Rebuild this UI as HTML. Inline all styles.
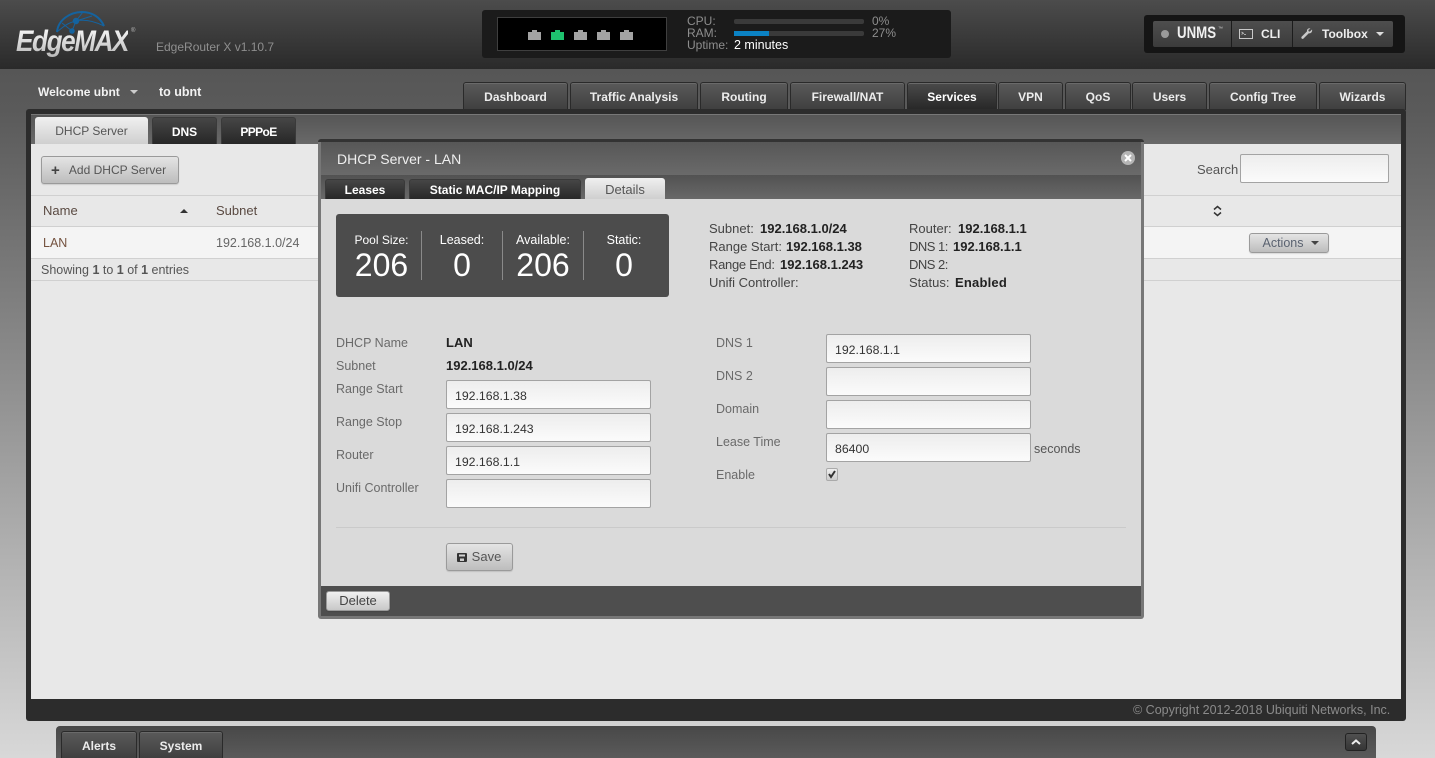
<!DOCTYPE html>
<html style="overflow:hidden;width:1435px;height:758px"><head><meta charset="utf-8"><title>EdgeMAX</title>
<style>
html,body{margin:0;padding:0}
body{width:1435px;height:758px;overflow:hidden;position:relative;font-family:"Liberation Sans",sans-serif;font-size:13px;background:#565656}
div,svg{position:absolute;box-sizing:border-box}
.t{position:absolute;white-space:nowrap;line-height:16px}
#root{left:0;top:0;width:1435px;height:758px;overflow:hidden;background:linear-gradient(#565656 69px,#5a5a5a 110px,#d8d8d8 758px)}
.tab{border:1px solid #2a2a2a;border-bottom:0;border-radius:3px 3px 0 0;background:linear-gradient(#5a5a5a,#3f3f3f);color:#ececec;font-weight:bold;text-align:center;font-size:12px;white-space:nowrap;box-shadow:inset 0 1px 0 #6a6a6a}
.dark{background:linear-gradient(#464646,#272727);border:1px solid #3a3a3a;border-bottom:0;color:#fff;border-radius:3px 3px 0 0;font-weight:bold;font-size:12px;text-align:center;white-space:nowrap;position:absolute}
.light{background:linear-gradient(#f0f0f0,#cfcfcf);color:#555;text-align:center;border-radius:3px 3px 0 0;position:absolute;white-space:nowrap}
.inp{background:linear-gradient(#ededed,#fbfbfb);border:1px solid #a3a3a3;border-radius:2px;height:29px;width:205px;color:#333;font-size:12.3px;line-height:29px;padding-left:8px;white-space:nowrap}
.btn{background:linear-gradient(#e4e4e4,#bdbdbd);border:1px solid #9a9a9a;border-radius:3px;color:#555;text-align:center;white-space:nowrap;box-shadow:0 1px 1px rgba(0,0,0,.12)}
.lb{color:#6a6a6a;font-size:12.5px}
.d{color:#444}
.b{color:#222;font-weight:bold;font-size:13px}
.w{color:#fff}
.hline{height:1px;background:#d0d0d0}
</style></head><body>
<div id="root">

<!-- header -->
<div style="left:0;top:0;width:1435px;height:69px;background:linear-gradient(#4c4c4c,#2a2a2a)"></div>
<span class="t" style="left:16px;top:25px;font-size:30px;line-height:34px;font-weight:bold;font-style:italic;letter-spacing:-1.6px;color:#dcdcdc;background:linear-gradient(#fff,#b4b4b4);-webkit-background-clip:text;background-clip:text;-webkit-text-fill-color:transparent;transform:scaleX(.87);transform-origin:0 0">EdgeMAX</span>
<svg style="left:50px;top:8px" width="66" height="36" viewBox="0 0 66 36" fill="none" stroke="#14639f" stroke-width="1.5">
<path d="M7 24C8 12 20 4 32 4C42 4 50 9 54 18" stroke-width="2"/>
<path d="M7 24C13 19 17 15 26 13C35 11 44 13 54 18" stroke-width="1"/>
<path d="M12 15L22 23L26 13L33 4M26 13L42 8" stroke-width="1"/>
<circle cx="26" cy="13" r="2.5" fill="#14639f"/><circle cx="22" cy="23" r="2" fill="#14639f"/>
</svg>
<span class="t" style="left:131px;top:27px;font-size:6px;line-height:8px;color:#bbb">®</span>
<span class="t" style="left:156px;top:39px;font-size:12px;color:#8f8f8f">EdgeRouter X v1.10.7</span>

<!-- status box -->
<div style="left:482px;top:10px;width:469px;height:48px;background:#1b1b1b;border-radius:3px"></div>
<div style="left:497px;top:17px;width:170px;height:34px;background:#000;border:1px solid #3f3f3f"></div>
<svg style="left:528px;top:29px" width="106" height="12" viewBox="0 0 106 12">
<path fill="#a3a3a3" d="M0 3H4V1H9V3H13V11H0Z"/>
<path fill="#1ec26e" d="M23 3H27V1H32V3H36V11H23Z"/>
<path fill="#a3a3a3" d="M46 3H50V1H55V3H59V11H46Z"/>
<path fill="#a3a3a3" d="M69 3H73V1H78V3H82V11H69Z"/>
<path fill="#a3a3a3" d="M92 3H96V1H101V3H105V11H92Z"/>
</svg>
<span class="t" style="left:687px;top:13px;font-size:12px;color:#8e8e8e">CPU:</span>
<span class="t" style="left:687px;top:25px;font-size:12px;color:#8e8e8e">RAM:</span>
<span class="t" style="left:687px;top:37px;font-size:12px;color:#8e8e8e">Uptime:</span>
<span class="t" style="left:734px;top:37px;font-size:12.5px;color:#fff">2 minutes</span>
<div style="left:734px;top:19px;width:130px;height:5px;background:#3a3a3a;border-radius:2px"></div>
<div style="left:734px;top:31px;width:130px;height:5px;background:#3a3a3a;border-radius:2px"></div>
<div style="left:734px;top:31px;width:35px;height:5px;background:#0b82c4"></div>
<span class="t" style="left:872px;top:13px;font-size:12px;color:#8e8e8e">0%</span>
<span class="t" style="left:872px;top:25px;font-size:12px;color:#8e8e8e">27%</span>

<!-- toolbox -->
<div style="left:1144px;top:15px;width:261px;height:38px;background:#151515;border-radius:3px"></div>
<div style="left:1153px;top:21px;width:240px;height:26px;background:linear-gradient(#4e4e4e,#3b3b3b);border-radius:2px"></div>
<div style="left:1231px;top:21px;width:1px;height:26px;background:#1c1c1c"></div>
<div style="left:1292px;top:21px;width:1px;height:26px;background:#1c1c1c"></div>
<div style="left:1161px;top:30px;width:8px;height:8px;border-radius:50%;background:#9a9a9a"></div>
<span class="t" style="left:1177px;top:23px;font-size:17px;line-height:20px;font-weight:bold;color:#f0f0f0;transform:scaleX(.78);transform-origin:0 0">UNMS</span>
<span class="t" style="left:1218px;top:26px;font-size:5px;line-height:6px;color:#ccc">™</span>
<svg style="left:1239px;top:29px" width="14" height="11" viewBox="0 0 14 11" fill="none" stroke="#c8c8c8"><rect x=".5" y=".5" width="13" height="9"/><path d="M2.5 3L4.5 4.2L2.5 5.4M5 5.5H7" stroke-width=".8"/></svg>
<span class="t" style="left:1261px;top:26px;font-size:12px;font-weight:bold;color:#eee">CLI</span>
<svg style="left:1301px;top:28px" width="12" height="12" viewBox="0 0 12 12"><path fill="#c8c8c8" d="M11 1.5L8.8 3.6L7.6 3.3L7.3 2L9.4.6C7.6-.2 5.6 1.2 6 3.4L.6 8.8C-.3 10 1.2 11.6 2.4 10.6L7.8 5.3C10 5.8 11.6 3.7 11 1.5Z"/></svg>
<span class="t" style="left:1322px;top:26px;font-size:12px;font-weight:bold;color:#eee">Toolbox</span>
<div style="left:1376px;top:32px;border:4px solid transparent;border-top:4px solid #ddd;border-bottom:0;width:0;height:0"></div>

<!-- welcome -->
<span class="t" style="left:38px;top:84px;font-size:12px;font-weight:bold;color:#f2f2f2">Welcome ubnt</span>
<div style="left:130px;top:90px;width:0;height:0;border:4px solid transparent;border-top-color:#ccc;border-bottom:0"></div>
<span class="t" style="left:159px;top:84px;font-size:12.5px;font-weight:bold;color:#f2f2f2">to ubnt</span>

<!-- top nav tabs -->
<div class="tab" style="left:463px;top:82px;width:105px;height:28px;line-height:29px">Dashboard</div>
<div class="tab" style="left:570px;top:82px;width:128px;height:28px;line-height:29px">Traffic Analysis</div>
<div class="tab" style="left:700px;top:82px;width:88px;height:28px;line-height:29px">Routing</div>
<div class="tab" style="left:790px;top:82px;width:115px;height:28px;line-height:29px">Firewall/NAT</div>
<div class="tab" style="left:907px;top:82px;width:90px;height:28px;line-height:29px;background:linear-gradient(#4a4a4a,#272727);color:#fff">Services</div>
<div class="tab" style="left:998px;top:82px;width:65px;height:28px;line-height:29px">VPN</div>
<div class="tab" style="left:1065px;top:82px;width:66px;height:28px;line-height:29px">QoS</div>
<div class="tab" style="left:1132px;top:82px;width:75px;height:28px;line-height:29px">Users</div>
<div class="tab" style="left:1209px;top:82px;width:108px;height:28px;line-height:29px">Config Tree</div>
<div class="tab" style="left:1319px;top:82px;width:87px;height:28px;line-height:29px">Wizards</div>

<!-- main panel -->
<div style="left:26px;top:109px;width:1380px;height:612px;background:#2c2c2c;border-radius:3px"></div>
<div style="left:31px;top:114px;width:1370px;height:30px;background:linear-gradient(#565656,#696969);border-top:1px solid #777"></div>
<div style="left:31px;top:144px;width:1370px;height:555px;background:#e8e8e8"></div>
<div class="light" style="left:35px;top:117px;width:113px;height:27px;line-height:28px;font-size:12px">DHCP Server</div>
<div class="dark" style="left:152px;top:117px;width:65px;height:27px;line-height:28px">DNS</div>
<div class="dark" style="left:221px;top:117px;width:75px;height:27px;line-height:28px;letter-spacing:-.6px">PPPoE</div>

<div class="btn" style="left:41px;top:156px;width:138px;height:28px;line-height:26px;padding-left:15px;font-size:12px">Add DHCP Server</div>
<span class="t" style="left:51px;top:163px;font-size:15px;font-weight:bold;color:#444">+</span>
<span class="t" style="left:1197px;top:162px;color:#555;font-size:13px">Search</span>
<div class="inp" style="left:1240px;top:154px;width:149px;height:29px"></div>

<div class="hline" style="left:31px;top:195px;width:1370px"></div>
<div class="hline" style="left:31px;top:226px;width:1370px"></div>
<div style="left:31px;top:227px;width:1370px;height:31px;background:#f4f4f4"></div>
<div class="hline" style="left:31px;top:258px;width:1370px"></div>
<div class="hline" style="left:31px;top:280px;width:1370px"></div>
<span class="t" style="left:43px;top:203px;color:#5a4a42;font-size:13px">Name</span>
<div style="left:180px;top:209px;width:0;height:0;border:4px solid transparent;border-bottom-color:#333;border-top:0"></div>
<span class="t" style="left:216px;top:203px;color:#5a4a42;font-size:13px">Subnet</span>
<span class="t" style="left:43px;top:234.5px;color:#74523f;font-size:12.5px">LAN</span>
<span class="t" style="left:216px;top:234.5px;color:#666;font-size:12.5px">192.168.1.0/24</span>
<span class="t" style="left:41px;top:262px;color:#555;font-size:12.5px">Showing <b>1</b> to <b>1</b> of <b>1</b> entries</span>
<svg style="left:1213px;top:205px" width="9" height="12" viewBox="0 0 9 12" fill="none" stroke="#333" stroke-width="1.5"><path d="M1 4.5L4.5 1.5L8 4.5M1 7.5L4.5 10.5L8 7.5"/></svg>
<div class="btn" style="left:1249px;top:233px;width:80px;height:20px;line-height:18px;padding-right:12px;font-size:12.5px;color:#5a6270">Actions</div>
<div style="left:1311px;top:241px;width:0;height:0;border:4px solid transparent;border-top-color:#444;border-bottom:0"></div>

<!-- footer -->
<span class="t" style="left:1133px;top:702px;font-size:12.5px;color:#8b8b8b">© Copyright 2012-2018 Ubiquiti Networks, Inc.</span>

<!-- bottom bar -->
<div style="left:56px;top:726px;width:1320px;height:32px;background:linear-gradient(#484848,#5a5a5a);border-radius:4px 4px 0 0"></div>
<div class="tab" style="left:61px;top:731px;width:76px;height:27px;line-height:29px">Alerts</div>
<div class="tab" style="left:139px;top:731px;width:84px;height:27px;line-height:29px">System</div>
<div style="left:1345px;top:733px;width:22px;height:18px;background:linear-gradient(#505050,#353535);border:1px solid #222;border-radius:3px"></div>
<svg style="left:1351px;top:739px" width="10" height="6" viewBox="0 0 10 6" fill="none" stroke="#eee" stroke-width="2"><path d="M1 5L5 1.5L9 5"/></svg>

<!-- modal -->
<div style="left:318px;top:139px;width:826px;height:480px;background:#777;border-radius:3px;border-top:3px solid #333"></div>
<div style="left:321px;top:142px;width:820px;height:33px;background:linear-gradient(#575757,#6a6a6a)"></div>
<span class="t" style="left:337px;top:151px;font-size:14px;color:#efefef">DHCP Server - LAN</span>
<div style="left:1121px;top:151px;width:14px;height:14px;border-radius:50%;background:#b5b5b5"></div>
<svg style="left:1124px;top:154px" width="8" height="8" viewBox="0 0 8 8" stroke="#fff" stroke-width="2"><path d="M1 1L7 7M7 1L1 7"/></svg>
<div style="left:321px;top:175px;width:820px;height:24px;background:linear-gradient(#525252,#686868)"></div>
<div class="dark" style="left:325px;top:179px;width:80px;height:20px;line-height:21px">Leases</div>
<div class="dark" style="left:409px;top:179px;width:172px;height:20px;line-height:21px">Static MAC/IP Mapping</div>
<div class="light" style="left:585px;top:178px;width:80px;height:21px;line-height:23px">Details</div>
<div style="left:321px;top:199px;width:820px;height:387px;background:#dadada"></div>
<div style="left:321px;top:586px;width:820px;height:30px;background:#4e4e4e"></div>

<!-- stats -->
<div style="left:336px;top:214px;width:333px;height:83px;background:#4c4c4c;border-radius:3px"></div>
<div style="left:421px;top:231px;width:1px;height:49px;background:#8a8a8a"></div>
<div style="left:502px;top:231px;width:1px;height:49px;background:#8a8a8a"></div>
<div style="left:583px;top:231px;width:1px;height:49px;background:#8a8a8a"></div>
<span class="t w" style="left:336px;top:232px;width:91px;text-align:center;font-size:12px">Pool Size:</span>
<span class="t w" style="left:422px;top:232px;width:80px;text-align:center;font-size:12.5px">Leased:</span>
<span class="t w" style="left:503px;top:232px;width:80px;text-align:center;font-size:12.5px">Available:</span>
<span class="t w" style="left:584px;top:232px;width:80px;text-align:center;font-size:12.5px">Static:</span>
<span class="t w" style="left:336px;top:246px;width:91px;text-align:center;font-size:32px;line-height:38px">206</span>
<span class="t w" style="left:422px;top:246px;width:80px;text-align:center;font-size:32px;line-height:38px">0</span>
<span class="t w" style="left:503px;top:246px;width:80px;text-align:center;font-size:32px;line-height:38px">206</span>
<span class="t w" style="left:584px;top:246px;width:80px;text-align:center;font-size:32px;line-height:38px">0</span>

<!-- summary -->
<span class="t d" style="left:709px;top:221px">Subnet:</span><span class="t b" style="left:760px;top:221px">192.168.1.0/24</span>
<span class="t d" style="left:709px;top:239px">Range Start:</span><span class="t b" style="left:786px;top:239px">192.168.1.38</span>
<span class="t d" style="left:709px;top:257px;letter-spacing:-.3px">Range End:</span><span class="t b" style="left:780px;top:257px">192.168.1.243</span>
<span class="t d" style="left:709px;top:275px">Unifi Controller:</span>
<span class="t d" style="left:909px;top:221px">Router:</span><span class="t b" style="left:958px;top:221px">192.168.1.1</span>
<span class="t d" style="left:909px;top:239px;letter-spacing:-.5px">DNS 1:</span><span class="t b" style="left:953px;top:239px">192.168.1.1</span>
<span class="t d" style="left:909px;top:257px;letter-spacing:-.5px">DNS 2:</span>
<span class="t d" style="left:909px;top:275px">Status:</span><span class="t b" style="left:955px;top:275px;letter-spacing:.2px">Enabled</span>

<!-- form left -->
<span class="t lb" style="left:336px;top:335px">DHCP Name</span>
<span class="t b" style="left:446px;top:335px">LAN</span>
<span class="t lb" style="left:336px;top:358px">Subnet</span>
<span class="t b" style="left:446px;top:358px">192.168.1.0/24</span>
<span class="t lb" style="left:336px;top:381px">Range Start</span>
<div class="inp" style="left:446px;top:380px;line-height:31px">192.168.1.38</div>
<span class="t lb" style="left:336px;top:414px">Range Stop</span>
<div class="inp" style="left:446px;top:413px;line-height:31px">192.168.1.243</div>
<span class="t lb" style="left:336px;top:447px">Router</span>
<div class="inp" style="left:446px;top:446px;line-height:31px">192.168.1.1</div>
<span class="t lb" style="left:336px;top:480px">Unifi Controller</span>
<div class="inp" style="left:446px;top:479px"></div>

<!-- form right -->
<span class="t lb" style="left:716px;top:335px">DNS 1</span>
<div class="inp" style="left:826px;top:334px;line-height:31px">192.168.1.1</div>
<span class="t lb" style="left:716px;top:368px">DNS 2</span>
<div class="inp" style="left:826px;top:367px"></div>
<span class="t lb" style="left:716px;top:401px">Domain</span>
<div class="inp" style="left:826px;top:400px"></div>
<span class="t lb" style="left:716px;top:434px">Lease Time</span>
<div class="inp" style="left:826px;top:433px;line-height:31px">86400</div>
<span class="t" style="left:1034px;top:441px;font-size:12.5px;color:#555">seconds</span>
<span class="t lb" style="left:716px;top:467px">Enable</span>
<div style="left:826px;top:468px;width:12px;height:13px;background:linear-gradient(#eee,#ccc);border:1px solid #aaa;border-radius:2px"></div>
<svg style="left:827px;top:469px" width="10" height="10" viewBox="0 0 10 10" fill="none" stroke="#333" stroke-width="2"><path d="M2 5L4 8L8 2"/></svg>

<div style="left:336px;top:527px;width:790px;height:1px;background:#cacaca"></div>
<div class="btn" style="left:446px;top:543px;width:67px;height:28px;line-height:26px;padding-left:14px">Save</div>
<svg style="left:457px;top:553px" width="10" height="9" viewBox="0 0 10 9"><path fill="#333" d="M0 1Q0 0 1 0H9Q10 0 10 1V8Q10 9 9 9H1Q0 9 0 8ZM2 1.5V3.5H8V1.5ZM3 5.5V8H7V5.5Z"/></svg>
<div class="btn" style="left:326px;top:591px;width:64px;height:20px;line-height:18px;color:#444;background:linear-gradient(#f0f0f0,#c8c8c8)">Delete</div>

</div>
</body></html>
